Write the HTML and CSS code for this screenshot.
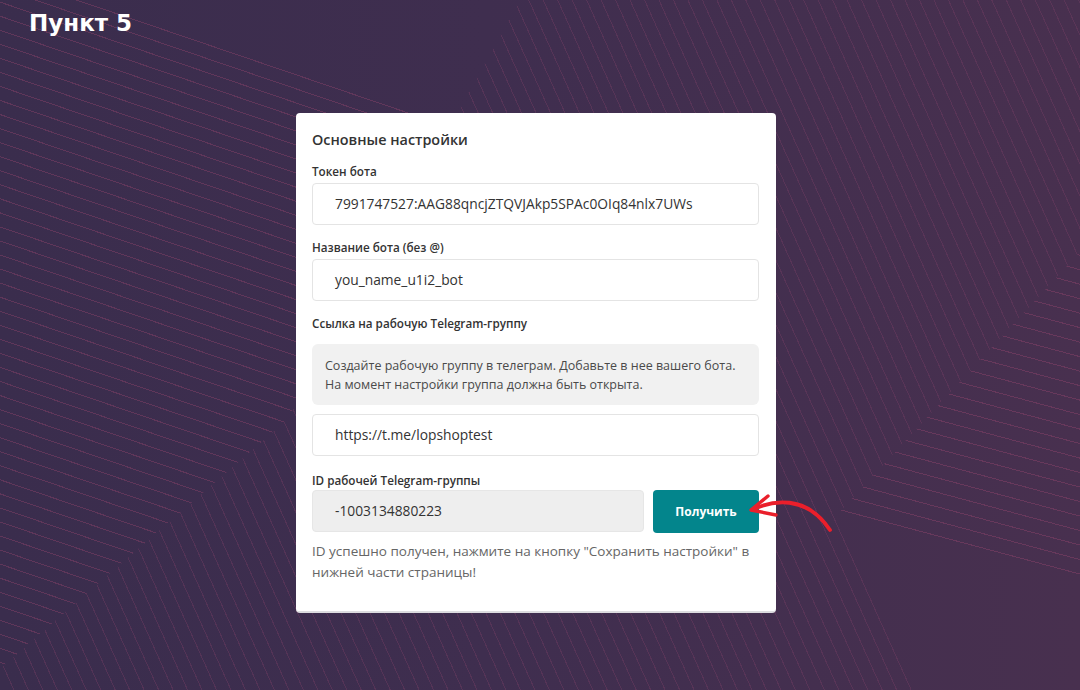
FILE: index.html
```html
<!DOCTYPE html>
<html lang="ru">
<head>
<meta charset="utf-8">
<title>Пункт 5</title>
<link rel="stylesheet" href="styles.css">
</head>
<body>
<div class="bg" aria-hidden="true">
  <div class="stripes stripes-left"></div>
  <div class="stripes stripes-mid"></div>
  <div class="stripes stripes-right"></div>
</div>
<h1 class="title">Пункт 5</h1>
<main class="stage">
  <section class="card">
    <h2 class="card-title">Основные настройки</h2>
    <div class="field">
      <div class="label">Токен бота</div>
      <div class="input">7991747527:AAG88qncjZTQVJAkp5SPAc0OIq84nlx7UWs</div>
    </div>
    <div class="field">
      <div class="label">Название бота (без @)</div>
      <div class="input">you_name_u1i2_bot</div>
    </div>
    <div class="field">
      <div class="label">Ссылка на рабочую Telegram-группу</div>
      <div class="note">Создайте рабочую группу в телеграм. Добавьте в нее вашего бота.<br>На момент настройки группа должна быть открыта.</div>
      <div class="input input-gap">https://t.me/lopshoptest</div>
    </div>
    <div class="field field-id">
      <div class="label label-id">ID рабочей Telegram-группы</div>
      <div class="row">
        <div class="input input-disabled">-1003134880223</div>
        <div class="btn">Получить</div>
      </div>
    </div>
    <p class="success">ID успешно получен, нажмите на кнопку "Сохранить настройки" в<br>нижней части страницы!</p>
  </section>
  <svg class="arrow" width="100" height="50" viewBox="740 490 100 50" aria-hidden="true">
    <path d="M752 510 C 772 500, 806 494, 830 530" fill="none" stroke="#ea1f2b" stroke-width="3.8" stroke-linecap="round"/>
    <path d="M768 496 L751 510 L776 515" fill="none" stroke="#ea1f2b" stroke-width="3.4" stroke-linecap="round" stroke-linejoin="round"/>
  </svg>
</main>
</body>
</html>
```
FILE: styles.css
```css
html, body {
  margin: 0;
  padding: 0;
}
body {
  width: 1080px;
  height: 690px;
  overflow: hidden;
  position: relative;
  background: linear-gradient(90deg, #3a2d4d 0%, #3f2e4f 45%, #48304f 100%);
  font-family: "Open Sans", "Noto Sans", sans-serif;
}
.bg {
  position: absolute;
  inset: 0;
  z-index: 0;
}
.stripes {
  position: absolute;
  inset: 0;
}
.stripes-left {
  background: repeating-linear-gradient(18.8deg, transparent 0 12.3px, rgba(125, 62, 100, 0.55) 12.3px 13.3px);
  clip-path: polygon(0 0, 106px 0, 452px 121px, 287px 420px, 33px 640px, 0 669px);
}
.stripes-mid {
  background: repeating-linear-gradient(65.8deg, transparent 0 12.2px, rgba(115, 60, 98, 0.42) 12.2px 13.2px);
  clip-path: polygon(520px 0, 1080px 0, 1080px 252px, 945px 398px, 835px 517px, 913px 690px, 0 690px, 0 669px, 33px 640px, 287px 420px);
}
.stripes-right {
  background: repeating-linear-gradient(15deg, transparent 0 13px, rgba(125, 62, 100, 0.6) 13px 14px);
  clip-path: polygon(1080px 252px, 1080px 587px, 835px 517px, 945px 398px);
}
.title {
  position: relative;
  z-index: 1;
  margin: 0;
  padding: 10px 0 0 29px;
  height: 26px;
  font-family: "DejaVu Sans", sans-serif;
  font-weight: bold;
  font-size: 23px;
  line-height: 26px;
  color: #ffffff;
}
.stage {
  position: relative;
  z-index: 1;
  padding: 77px 0 0 296px;
}
.card {
  box-sizing: border-box;
  width: 480px;
  height: 500px;
  padding: 17px 17px 0 16px;
  background: #ffffff;
  border-radius: 4px;
  border-bottom: 2px solid #dcdcdf;
}
.card-title {
  margin: 0 0 13px;
  font-size: 14.4px;
  font-weight: 600;
  line-height: 20px;
  color: #333333;
}
.field {
  margin-bottom: 14px;
}
.label {
  font-size: 11.7px;
  font-weight: 600;
  line-height: 16px;
  color: #333333;
  margin-bottom: 4px;
}
.input {
  box-sizing: border-box;
  height: 42px;
  padding: 0 22px;
  border: 1px solid #e4e4e4;
  border-radius: 4px;
  font-size: 13.8px;
  line-height: 40px;
  color: #333333;
  white-space: nowrap;
  overflow: hidden;
}
.note {
  margin-top: 13px;
  padding: 12px 8px 11px 13px;
  background: #f1f1f1;
  border-radius: 6px;
  font-size: 12.5px;
  line-height: 19px;
  color: #4a4a4a;
  white-space: nowrap;
}
.input-gap {
  margin-top: 9px;
}
.field-id {
  margin-top: 16px;
  margin-bottom: 0;
}
.label-id {
  margin-bottom: 2px;
}
.row {
  display: flex;
  gap: 9px;
}
.row .input {
  flex: 1;
}
.input-disabled {
  background: #eeeeee;
  border-color: #e6e6e6;
}
.btn {
  box-sizing: border-box;
  width: 106px;
  height: 43px;
  border-radius: 4px;
  background: #03858c;
  color: #ffffff;
  font-size: 12px;
  font-weight: 700;
  line-height: 43px;
  text-align: center;
}
.success {
  margin: 8px 0 0;
  font-size: 13.5px;
  line-height: 21px;
  color: #666666;
  white-space: nowrap;
}
.arrow {
  position: absolute;
  left: 740px;
  top: 454px;
  overflow: visible;
}
```
